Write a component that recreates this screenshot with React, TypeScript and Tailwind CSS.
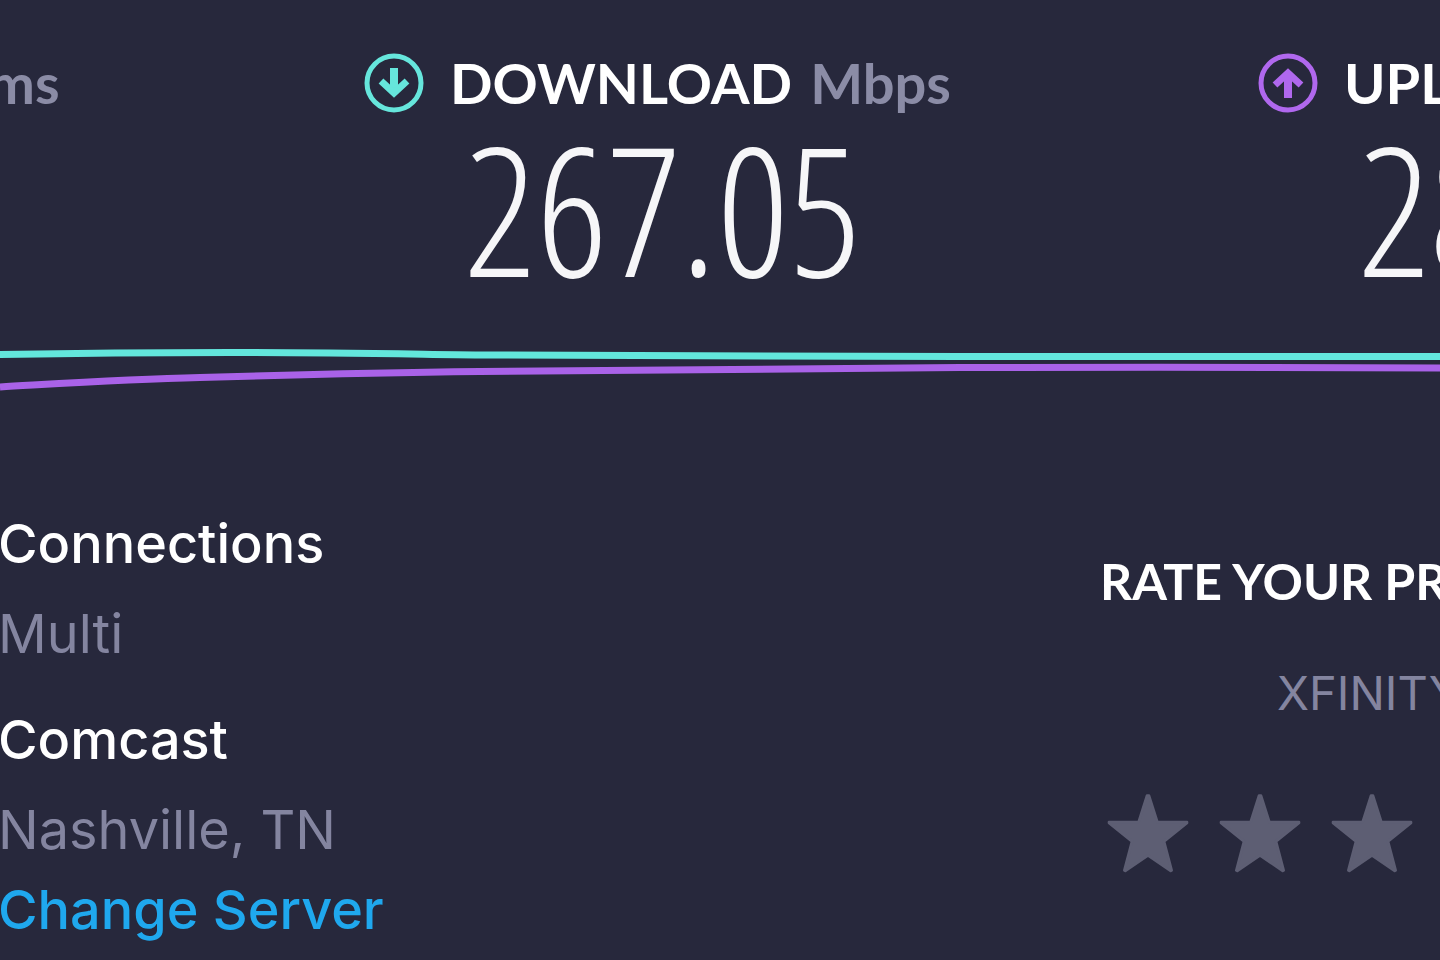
type Direction = "down" | "up";

const DirectionIcon = ({ direction }: { direction: Direction }) => (
    <svg
        viewBox="-30 -30 60 60"
        className={`size-[60px] shrink-0 ${direction === "down" ? "text-[#66e6dc]" : "text-[#b068ee]"}`}
        fill="none"
        stroke="currentColor"
        aria-hidden="true"
    >
        <circle r="27" strokeWidth="5" />
        <g transform={direction === "up" ? "scale(1 -1)" : undefined}>
            <path d="M0 -15V9" strokeWidth="8" />
            <path d="M-13 -2L0 10L13 -2" strokeWidth="7" />
        </g>
    </svg>
);

const Star = () => (
    <svg viewBox="0 0 246 237" className="h-[79px] w-[82px]" fill="currentColor" aria-hidden="true">
        <path
            d="M120 5H126L151 84H240V87L171 142L194 229L191 231L123 184L55 231L52 229L75 142L6 87V84H95Z"
            stroke="currentColor"
            strokeWidth="8"
            strokeLinejoin="round"
        />
    </svg>
);

type SpeedProps = {
    direction: Direction;
    label: string;
    value: string;
};

const Speed = ({ direction, label, value }: SpeedProps) => (
    <section className="w-[894px] shrink-0">
        <h2 className="flex items-center whitespace-nowrap font-['Lato',sans-serif] text-[56px] leading-[60px] font-bold text-white">
            <DirectionIcon direction={direction} />
            <span className="ml-[26px]">{label}</span>
            <span className="ml-[18px] text-[#8b8ca6]">Mbps</span>
        </h2>
        <p className="pl-[100px] font-['Open_Sans_Condensed_Light','Open_Sans_Condensed',sans-serif] text-[180px] leading-[190px] font-light text-[#f6f6f8]">
            {value}
        </p>
    </section>
);

const App = () => {
    return (
        <main className="min-h-screen overflow-hidden bg-[#27283c] font-['Inter',sans-serif] text-[54px] leading-[80px] text-[#8485a0]">

            {/* Results */}
            <header className="flex h-[330px] pt-[53px]">
                <div className="flex w-[364px] shrink-0">
                    <span className="-ml-3 font-['Lato',sans-serif] text-[56px] leading-[60px] font-bold text-[#8b8ca6]">
                        ms
                    </span>
                </div>
                <Speed direction="down" label="DOWNLOAD" value="267.05" />
                <Speed direction="up" label="UPLOAD" value="28" />
            </header>

            {/* Speed graph */}
            <svg viewBox="0 0 1440 80" preserveAspectRatio="none" className="h-20 w-full" fill="none" strokeWidth="7" aria-hidden="true">
                <path d="M0 57C70 53 130 49 200 47.500C300 44.500 390 42.500 480 41.500C640 39 800 38 960 37.500S1280 37 1440 38" stroke="#a962e8" />
                <path d="M0 24.500C80 23.500 150 22.500 230 22.500C320 22.500 400 24 480 25C640 26.500 800 26.500 960 26.500H1440" stroke="#63e6dc" />
            </svg>

            <div className="flex justify-between">

                {/* Server */}
                <div className="-ml-[2px] pt-[94px] whitespace-nowrap">
                    <h3 className="font-medium text-white">Connections</h3>
                    <p className="mt-[10px]">Multi</p>
                    <h3 className="mt-[26px] font-medium text-white">Comcast</h3>
                    <p className="mt-[10px]">Nashville, TN</p>
                    <a href="#servers" className="block font-medium text-[#1fa8ee]">
                        Change Server
                    </a>
                </div>

                {/* Rating */}
                <form className="-mr-[202px] flex w-[540px] shrink-0 flex-col pt-[141px] whitespace-nowrap">
                    <h3 className="-ml-[2px] font-['Lato',sans-serif] text-[50px] leading-[60px] font-bold text-white">
                        RATE YOUR PROVIDER
                    </h3>
                    <p className="mt-[52px] pl-[175px] text-[47px] leading-[60px]">XFINITY</p>
                    <div className="mt-[71px] flex gap-[30px] pl-[5px] text-[#5d5e73]">
                        {[1, 2, 3, 4, 5].map((rating) => (
                            <button key={rating} type="button" aria-label={`${rating} stars`} className="shrink-0">
                                <Star />
                            </button>
                        ))}
                    </div>
                </form>

            </div>

        </main>
    );
};

export default App;
